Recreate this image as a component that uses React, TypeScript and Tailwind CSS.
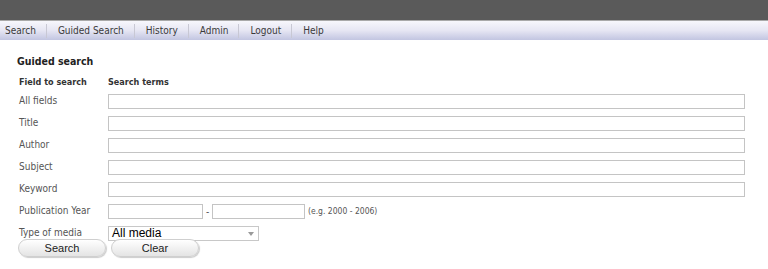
import React from 'react';

const fields = ['All fields', 'Title', 'Author', 'Subject', 'Keyword'];
const navItems = ['Search', 'Guided Search', 'History', 'Admin', 'Logout', 'Help'];

export default function App() {
  return (
    <div className="w-[768px] h-[269px] bg-white overflow-hidden text-[10px] text-[#555] font-stretch-condensed" style={{ fontFamily: '"DejaVu Sans Condensed", "DejaVu Sans", sans-serif' }}>
      {/* Top bar */}
      <div className="h-[20px] bg-[#5a5a5a]" />
      <nav className="h-[20px] border-t border-[#a9a9a9] bg-gradient-to-b from-[#f7f7fc] via-[#e6e6f3] to-[#c2c5e1] flex items-center text-[#3a3a3a] text-[10px]">
        {navItems.map((item, idx) => (
          <div key={item} className="flex items-center">
            {idx > 0 && <div className="w-px h-[14px] bg-[#c8c8d4] ml-[10px] mr-[11px]" />}
            <span className={idx === 0 ? 'pl-[5px]' : ''}>{item}</span>
          </div>
        ))}
      </nav>

      <div className="pl-[17px] pt-[14px]">
        <h1 className="text-[10.5px] font-bold text-[#222] leading-[14px]">Guided search</h1>

        <div className="mt-[8px] pl-[2px]">
          <div className="flex items-center h-[14px] font-bold text-[9px] text-[#333]">
            <div className="w-[89px]">Field to search</div>
            <div>Search terms</div>
          </div>

          <div className="mt-[4px] flex flex-col">
            {fields.map((f) => (
              <div key={f} className="flex items-start h-[22px]">
                <div className="w-[89px] pt-[1px] leading-[12px]">{f}</div>
                <input className="w-[637px] h-[15px] border border-[#c4c4c4] bg-white outline-none" />
              </div>
            ))}
            <div className="flex items-start h-[22px]">
              <div className="w-[89px] pt-[1px] leading-[12px]">Publication Year</div>
              <input className="w-[95px] h-[15px] border border-[#c4c4c4] bg-white outline-none" />
              <span className="w-[9px] text-center leading-[15px]">-</span>
              <input className="w-[93px] h-[15px] border border-[#c4c4c4] bg-white outline-none" />
              <span className="ml-[3px] leading-[15px] text-[8.5px]">(e.g. 2000 - 2006)</span>
            </div>
            <div className="flex items-start h-[14px]">
              <div className="w-[89px] pt-[1px] leading-[12px]">Type of media</div>
              <div className="w-[151px] h-[15px] border border-[#c8c8c8] bg-white flex items-center justify-between pl-[3px] pr-[4px] text-[12px] text-black font-stretch-normal" style={{ fontFamily: '"Liberation Sans", Arial, sans-serif' }}>
                <span className="leading-[13px]">All media</span>
                <svg width="6" height="4" viewBox="0 0 6 4"><path d="M0 0h6L3 4z" fill="#9a9a9a" /></svg>
              </div>
            </div>
          </div>

          <div className="flex gap-[5px] -mt-[1px] -ml-[1px]">
            {['Search', 'Clear'].map((b) => (
              <button
                key={b}
                className="w-[88px] h-[18px] rounded-full border border-[#cfcfcf] bg-gradient-to-b from-white to-[#e4e4e4] shadow-[1px_1px_1px_rgba(0,0,0,0.2)] text-[11px] text-[#222] leading-none font-stretch-normal"
                style={{ fontFamily: '"Liberation Sans", Arial, sans-serif' }}
              >
                {b}
              </button>
            ))}
          </div>
        </div>
      </div>
    </div>
  );
}
